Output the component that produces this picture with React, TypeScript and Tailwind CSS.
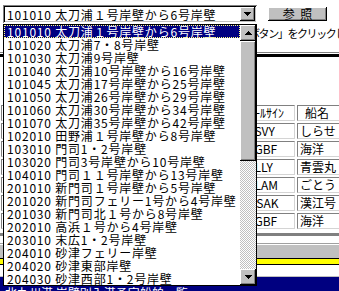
import React from "react";

const items = [
  "101010 太刀浦１号岸壁から6号岸壁",
  "101020 太刀浦7・8号岸壁",
  "101030 太刀浦9号岸壁",
  "101040 太刀浦10号岸壁から16号岸壁",
  "101045 太刀浦17号岸壁から25号岸壁",
  "101050 太刀浦26号岸壁から29号岸壁",
  "101060 太刀浦30号岸壁から34号岸壁",
  "101070 太刀浦35号岸壁から42号岸壁",
  "102010 田野浦１号岸壁から8号岸壁",
  "103010 門司1・2号岸壁",
  "103020 門司3号岸壁から10号岸壁",
  "104010 門司１１号岸壁から13号岸壁",
  "201010 新門司１号岸壁から5号岸壁",
  "201020 新門司フェリー1号から4号岸壁",
  "201030 新門司北１号から8号岸壁",
  "202010 高浜１号から4号岸壁",
  "203010 末広1・2号岸壁",
  "204010 砂津フェリー岸壁",
  "204020 砂津東部岸壁",
  "204030 砂津西部1・2号岸壁",
];

const rows = [
  ["ｺｰﾙｻｲﾝ", "船名"],
  ["JSVY", "しらせ"],
  ["JGBF", "海洋"],
  ["JLLY", "青雲丸"],
  ["JLAM", "ごとう"],
  ["DSAK", "漢江号"],
  ["JGBF", "海洋"],
];

function Arrow({ dir }: { dir: "up" | "down" }) {
  return (
    <svg width="7" height="4" viewBox="0 0 7 4" shapeRendering="crispEdges" className="block">
      {dir === "down" ? (
        <path d="M0 0h7v1H0zM1 1h5v1H1zM2 2h3v1H2zM3 3h1v1H3z" fill="#000" />
      ) : (
        <path d="M3 0h1v1H3zM2 1h3v1H2zM1 2h5v1H1zM0 3h7v1H0z" fill="#000" />
      )}
    </svg>
  );
}

const raised =
  "bg-[#c0c0c0] shadow-[inset_-1px_-1px_0_#000,inset_1px_1px_0_#fff,inset_-2px_-2px_0_#808080]";

const cell =
  "h-[16px] border border-t-[#808080] border-l-[#808080] border-b-[#d4d4d4] border-r-[#d4d4d4] whitespace-nowrap overflow-hidden";

export default function App() {
  return (
    <div className="relative w-[339px] h-[291px] overflow-hidden bg-white text-black font-['Noto_Sans_CJK_JP',sans-serif] flex flex-col">
      {/* top row */}
      <div className="flex h-[24px] shrink-0 pt-[5px] pl-[3px]">
        <div className="w-[254px] h-[18px] bg-white shadow-[inset_1px_1px_0_#808080,inset_-1px_-1px_0_#fff,inset_2px_2px_0_#000,inset_-2px_-2px_0_#c0c0c0] flex items-center pl-[4px] pr-[2px]">
          <span className="flex-1 text-[12px] leading-[13px] tracking-[0.8px] whitespace-nowrap">
            101010 太刀浦１号岸壁から6号岸壁
          </span>
          <div className={`w-[15px] h-[14px] shrink-0 flex items-center justify-center ${raised}`}>
            <Arrow dir="down" />
          </div>
        </div>
        <div
          className={`ml-[11px] mt-[2px] w-[59px] h-[14px] flex items-center justify-center text-[12px] leading-[12px] ${raised}`}
        >
          参&nbsp;&nbsp;照
        </div>
      </div>

      {/* instruction */}
      <div className="h-[28px] shrink-0 pt-[3px] pl-[249px] whitespace-nowrap overflow-hidden text-[11px] leading-[12px] tracking-[-1.4px]">
        ボタン」をクリックしてください。
      </div>
      <div className="h-[1px] shrink-0 bg-[#808080]" />
      <div className="h-[1px] shrink-0 bg-white" />
      <div className="h-[3px] shrink-0 bg-black" />
      <div className="h-[48px] shrink-0" />

      {/* table */}
      <div className="w-[367px] shrink-0 pl-[1px] grid grid-cols-[78px_80px_80px_50px_70px] gap-[2px] text-[12px] leading-[14px]">
        {rows.map((r, i) => (
          <React.Fragment key={i}>
            <div className={cell} />
            <div className={cell} />
            <div className={cell} />
            <div className={`${cell} pl-[2px]`}>{r[0]}</div>
            <div className={`${cell} ${i === 0 ? "pl-[7px]" : "pl-[2px]"}`}>{r[1]}</div>
          </React.Fragment>
        ))}
      </div>

      <div className="h-[4px] shrink-0" />
      <div className="h-[3px] shrink-0 bg-[#808080]" />
      <div className="h-[7px] shrink-0" />
      <div className="h-[1px] shrink-0 bg-[#a0a0a0]" />
      <div className="h-[1px] shrink-0 bg-white" />
      <div className="h-[13px] shrink-0 bg-[#c0c0c0]" />
      <div className="h-[1px] shrink-0 bg-black" />
      <div className="h-[5px] shrink-0 bg-[#ffff00]" />
      <div className="h-[1px] shrink-0 bg-black" />
      <div className="h-[11px] shrink-0 bg-white" />
      <div className="h-[1px] shrink-0 bg-[#c0c0c0]" />
      <div className="flex-1 bg-[#000080] text-white text-[12px] leading-[12px] pt-[10px] pl-[5px] whitespace-nowrap">
        北九州港 岸壁別入港予定船舶一覧
      </div>

      {/* dropdown list overlay */}
      <div className="absolute left-[3px] top-[24px] w-[254px] h-[262px] border border-black bg-white flex">
        <div className="flex-1 flex flex-col overflow-hidden">
          {items.map((t, i) => (
            <div
              key={t}
              className={`h-[13px] shrink-0 pl-[3px] text-[12px] leading-[13px] tracking-[0.8px] whitespace-nowrap ${
                i === 0
                  ? "bg-[#000080] text-white outline-1 outline-dotted outline-[#ffff80] -outline-offset-1"
                  : ""
              }`}
            >
              {t}
            </div>
          ))}
        </div>
        <div className="w-[16px] flex flex-col">
          <div className={`h-[16px] shrink-0 flex items-center justify-center ${raised}`}>
            <Arrow dir="up" />
          </div>
          <div className={`h-[120px] shrink-0 ${raised}`} />
          <div className="flex-1 bg-[image:repeating-conic-gradient(#c0c0c0_0%_25%,#ffffff_0%_50%)] bg-size-[2px_2px]" />
          <div className={`h-[16px] shrink-0 flex items-center justify-center ${raised}`}>
            <Arrow dir="down" />
          </div>
        </div>
      </div>
    </div>
  );
}
